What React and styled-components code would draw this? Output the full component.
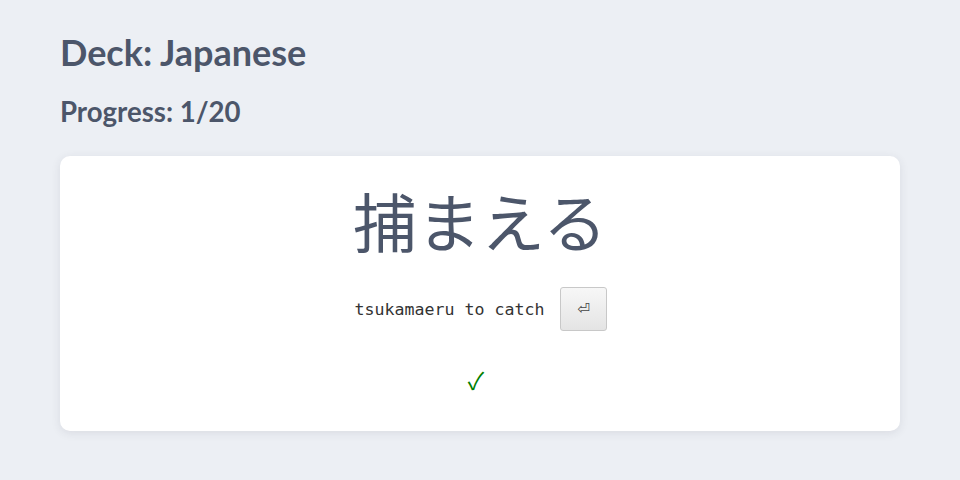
import React from "react";
import styled, { createGlobalStyle } from "styled-components";

const Global = createGlobalStyle`
  html, body { margin: 0; padding: 0; background: #eceff4; }
  body { font-family: "Lato", "Noto Sans", sans-serif; color: #4c566a; }
`;

const Page = styled.div`
  padding: 28px 60px;
  display: flex;
  flex-direction: column;
`;

const Title = styled.h1`
  margin: 0;
  font-size: 36px;
  line-height: 48px;
  font-weight: 700;
`;

const Progress = styled.h2`
  margin: 18px 0 0;
  font-size: 27.6px;
  line-height: 36px;
  font-weight: 700;
`;

const Card = styled.div`
  margin-top: 26px;
  background: #fff;
  border-radius: 10px;
  box-shadow: 0 2px 10px rgba(46, 52, 64, 0.1);
  height: 275px;
  box-sizing: border-box;
  display: flex;
  flex-direction: column;
  align-items: center;
  padding-top: 23px;
`;

const Word = styled.div`
  font-family: "Noto Sans CJK JP", sans-serif;
  font-size: 64px;
  line-height: 80px;
  color: #4c566a;
`;

const AnswerRow = styled.div`
  margin-top: 28px;
  display: flex;
  align-items: center;
  gap: 16px;
  padding-left: 2px;
`;

const Answer = styled.span`
  font-family: "DejaVu Sans Mono", monospace;
  font-size: 16.6px;
  color: #333;
`;

const EnterButton = styled.button`
  width: 47px;
  height: 44px;
  border: 1px solid #c8c8c8;
  border-radius: 3px;
  background: linear-gradient(#f7f7f7, #e4e4e4);
  font-family: "DejaVu Sans", sans-serif;
  font-size: 15px;
  color: #444;
  padding: 0;
`;

const Check = styled.div`
  margin-top: 34px;
  margin-right: 8px;
  font-family: "Noto Sans CJK JP", sans-serif;
  font-size: 24px;
  line-height: 30px;
  color: #008000;
`;

export default function App() {
  return (
    <>
      <Global />
      <Page>
        <Title>Deck: Japanese</Title>
        <Progress>Progress: 1/20</Progress>
        <Card>
          <Word>捕まえる</Word>
          <AnswerRow>
            <Answer>tsukamaeru to catch</Answer>
            <EnterButton>⏎</EnterButton>
          </AnswerRow>
          <Check>✓</Check>
        </Card>
      </Page>
    </>
  );
}
